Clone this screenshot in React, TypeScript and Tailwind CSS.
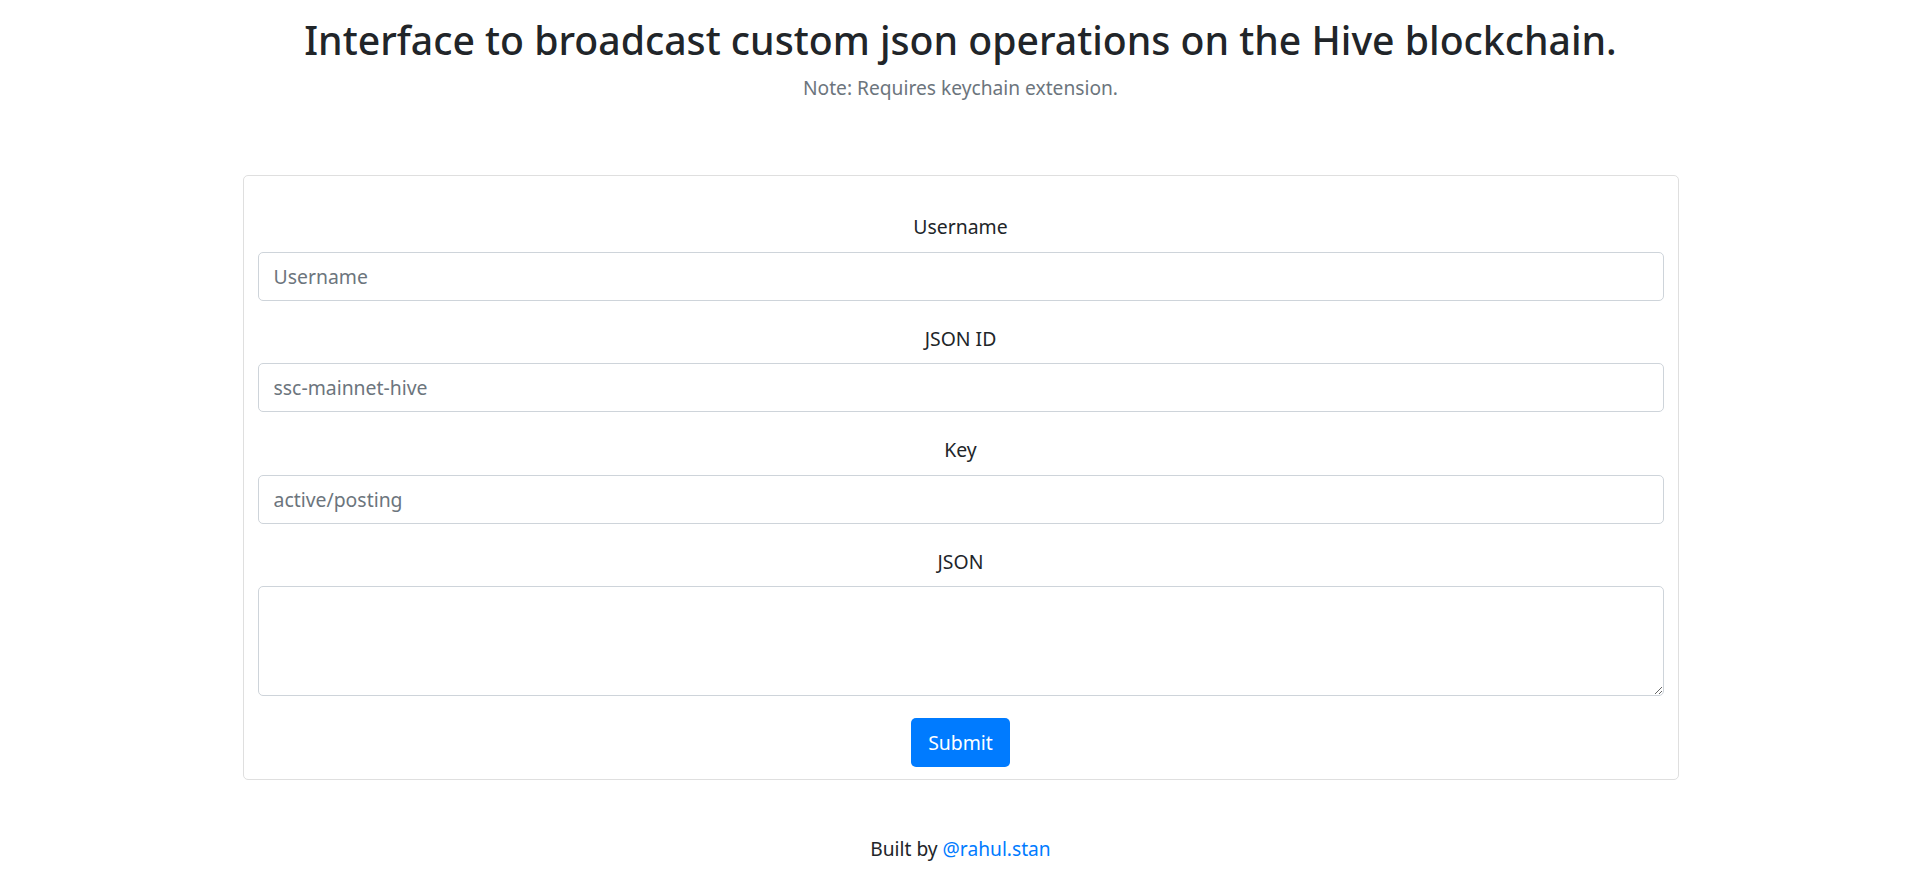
import React from "react";

const font = { fontFamily: '"Noto Sans", "Open Sans", Arial, sans-serif' };

function Field({ label, placeholder }: { label: string; placeholder: string }) {
  return (
    <div className="mb-[23px]">
      <label className="block text-center text-[19.4px] leading-[29.4px] text-[#212529] mb-[10px]">{label}</label>
      <input
        type="text"
        placeholder={placeholder}
        className="block w-full h-[49px] rounded-[5px] border border-[#ced4da] bg-white px-[15px] text-[19.4px] text-[#495057] placeholder:text-[#6c757d] outline-none"
      />
    </div>
  );
}

export default function App() {
  return (
    <div className="min-h-screen bg-white text-[#212529]" style={font}>
      <div className="pt-[11px] text-center">
        <h1 className="text-[39.2px] font-medium leading-[58px] text-[#212529]">
          Interface to broadcast custom json operations on the Hive blockchain.
        </h1>
        <p className="mt-[4px] text-[19.2px] leading-[29.4px] text-[#6c757d]">Note: Requires keychain extension.</p>
      </div>

      <div className="mx-auto mt-[72.5px] w-[1436px] rounded-[5px] border border-[#dfdfdf] px-[14px] pt-[36.5px] pb-[12px]">
        <Field label="Username" placeholder="Username" />
        <Field label="JSON ID" placeholder="ssc-mainnet-hive" />
        <Field label="Key" placeholder="active/posting" />
        <div className="mb-[22px]">
          <label className="block text-center text-[19.4px] leading-[29.4px] text-[#212529] mb-[10px]">JSON</label>
          <textarea className="block w-full h-[110px] rounded-[5px] border border-[#ced4da] bg-white px-[15px] py-[7px] text-[19.4px] text-[#495057] outline-none" />
        </div>
        <div className="flex justify-center">
          <button className="h-[49px] w-[99px] rounded-[5px] bg-[#007bff] text-[19.4px] text-white">Submit</button>
        </div>
      </div>

      <p className="mt-[54px] text-center text-[19.2px] leading-[29.4px] text-[#212529]">
        Built by <a href="#" className="text-[#007bff]">@rahul.stan</a>
      </p>
    </div>
  );
}
